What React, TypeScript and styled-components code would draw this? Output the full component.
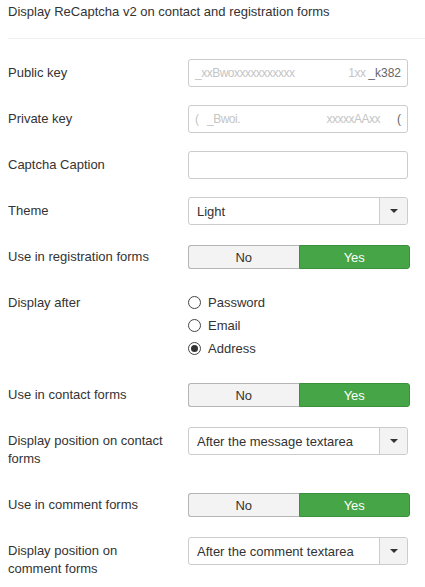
import React from "react";
import styled, { createGlobalStyle } from "styled-components";

const GlobalStyle = createGlobalStyle`
    body{
        margin:0;
        background:#fff;
        font-family:"Liberation Sans", Arial, sans-serif;
        font-size:13px;
        color:#333;
    }
`

const Page = styled.div`
    padding:3px 0px 0px 8px;
    width:417px;
`
const Title = styled.div`
    line-height:18px;
    color:#333;
    padding-bottom:17px;
    border-bottom:1px solid #eee;
    margin-bottom:20px;
`
const Row = styled.div<{ $gap?: number }>`
    display:flex;
    align-items:flex-start;
    margin-bottom:${p => p.$gap ?? 18}px;
`
const Label = styled.div`
    width:160px;
    margin-right:20px;
    padding:5px 0px;
    line-height:18px;
    color:#333;
`
const Controls = styled.div`
    min-height:28px;
    display:flex;
    align-items:center;
`
const TextBox = styled.div`
    box-sizing:border-box;
    width:220px;
    height:28px;
    border:1px solid #ccc;
    border-radius:3px;
    background:#fff;
    padding:0px 6px;
    display:flex;
    align-items:center;
    overflow:hidden;
    white-space:nowrap;
    font-size:12px;
    span.faint{
        color:#c5c5c5;
        letter-spacing:-0.5px;
    }
    span.gap{
        flex:1;
    }
    span.tail{
        color:#666;
    }
`
const Select = styled.div`
    box-sizing:border-box;
    width:220px;
    height:28px;
    border:1px solid #ccc;
    border-radius:3px;
    background:#fff;
    display:flex;
    align-items:stretch;
    .value{
        flex:1;
        padding-left:8px;
        display:flex;
        align-items:center;
        color:#333;
    }
    .caret{
        width:27px;
        border-left:1px solid #ccc;
        background:#f3f3f3;
        border-radius:0px 3px 3px 0px;
        display:flex;
        align-items:center;
        justify-content:center;
    }
    .caret:after{
        content:"";
        border-left:4px solid transparent;
        border-right:4px solid transparent;
        border-top:4px solid #333;
    }
`
const Toggle = styled.div`
    display:flex;
    width:222px;
    height:24px;
`
const ToggleBtn = styled.div<{ $active?: boolean }>`
    box-sizing:border-box;
    flex:1;
    display:flex;
    align-items:center;
    justify-content:center;
    font-size:13px;
    border:1px solid ${p => p.$active ? "#3b8f3b" : "#b5b5b5"};
    background:${p => p.$active ? "#46a546" : "#f3f3f3"};
    color:${p => p.$active ? "#fff" : "#333"};
    &:first-child{
        border-radius:3px 0px 0px 3px;
        border-right:none;
    }
    &:last-child{
        border-radius:0px 3px 3px 0px;
    }
`
const RadioList = styled.div`
    padding:2px 0px 3px 0px;
`
const RadioItem = styled.div`
    height:23px;
    display:flex;
    align-items:center;
    color:#333;
`
const RadioDot = styled.span<{ $checked?: boolean }>`
    box-sizing:border-box;
    width:13px;
    height:13px;
    border:1px solid #444;
    border-radius:50%;
    margin-right:7px;
    display:flex;
    align-items:center;
    justify-content:center;
    &:after{
        content:"";
        width:7px;
        height:7px;
        border-radius:50%;
        background:${p => p.$checked ? "#333" : "transparent"};
    }
`

const YesNo: React.FC = () => (
    <Toggle>
        <ToggleBtn>No</ToggleBtn>
        <ToggleBtn $active>Yes</ToggleBtn>
    </Toggle>
)

const Dropdown: React.FC<{ value: string }> = ({ value }) => (
    <Select>
        <div className="value">{value}</div>
        <div className="caret" />
    </Select>
)

export default function App() {
    return (
        <Page>
            <GlobalStyle />
            <Title>Display ReCaptcha v2 on contact and registration forms</Title>

            <Row>
                <Label>Public key</Label>
                <Controls>
                    <TextBox>
                        <span className="faint">_xxBwoxxxxxxxxxxx</span>
                        <span className="gap" />
                        <span className="faint">1xx&nbsp;</span>
                        <span className="tail">_k382</span>
                    </TextBox>
                </Controls>
            </Row>
            <Row>
                <Label>Private key</Label>
                <Controls>
                    <TextBox>
                        <span className="faint">(&nbsp;&nbsp;&nbsp;_Bwoi.</span>
                        <span className="gap" />
                        <span className="faint">xxxxxAAxx&nbsp;&nbsp;&nbsp;&nbsp;&nbsp;&nbsp;</span>
                        <span className="tail">(</span>
                    </TextBox>
                </Controls>
            </Row>
            <Row>
                <Label>Captcha Caption</Label>
                <Controls><TextBox /></Controls>
            </Row>
            <Row>
                <Label>Theme</Label>
                <Controls><Dropdown value="Light" /></Controls>
            </Row>
            <Row>
                <Label>Use in registration forms</Label>
                <Controls><YesNo /></Controls>
            </Row>
            <Row>
                <Label>Display after</Label>
                <RadioList>
                    <RadioItem><RadioDot />Password</RadioItem>
                    <RadioItem><RadioDot />Email</RadioItem>
                    <RadioItem><RadioDot $checked />Address</RadioItem>
                </RadioList>
            </Row>
            <Row>
                <Label>Use in contact forms</Label>
                <Controls><YesNo /></Controls>
            </Row>
            <Row>
                <Label>Display position on contact forms</Label>
                <Controls><Dropdown value="After the message textarea" /></Controls>
            </Row>
            <Row>
                <Label>Use in comment forms</Label>
                <Controls><YesNo /></Controls>
            </Row>
            <Row>
                <Label>Display position on comment forms</Label>
                <Controls><Dropdown value="After the comment textarea" /></Controls>
            </Row>
        </Page>
    )
}
